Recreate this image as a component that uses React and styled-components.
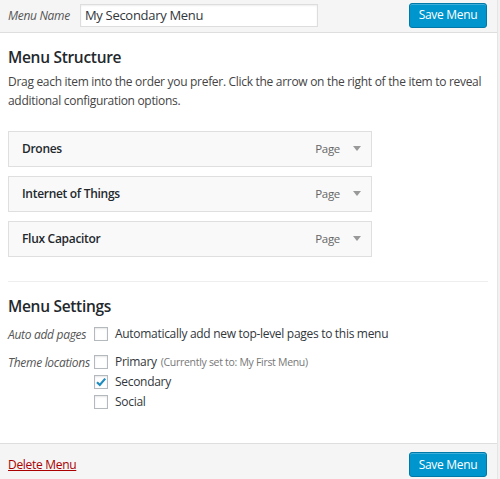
import React from 'react'
import styled, { createGlobalStyle } from 'styled-components'

const GlobalStyle = createGlobalStyle`
  body {
    margin: 0;
    background: #f1f1f1;
    font-family: "Open Sans", "Liberation Sans", sans-serif;
    color: #23282d;
    letter-spacing: -0.3px;
  }
`

const items = ['Drones', 'Internet of Things', 'Flux Capacitor']

const Check = ({ checked }) => (
  <Box>
    {checked && (
      <svg width="12" height="12" viewBox="0 0 12 12">
        <path d="M2 6.2 L4.8 9 L10.2 2.6" fill="none" stroke="#1e8cbe" strokeWidth="2.2" />
      </svg>
    )}
  </Box>
)

const App = () => {
  return (
    <>
      <GlobalStyle />
      <Panel>
        <Header>
          <NameLabel>Menu Name</NameLabel>
          <NameInput defaultValue="My Secondary Menu" />
          <SaveButton>Save Menu</SaveButton>
        </Header>
        <Body>
          <Heading>Menu Structure</Heading>
          <Description>
            Drag each item into the order you prefer. Click the arrow on the right of the item to reveal
            additional configuration options.
          </Description>
          <ItemList>
            {items.map((item) => (
              <Item key={item}>
                <ItemTitle>{item}</ItemTitle>
                <ItemType>Page</ItemType>
                <Arrow />
              </Item>
            ))}
          </ItemList>
          <Divider />
          <Heading>Menu Settings</Heading>
          <SettingRow>
            <SettingLabel>Auto add pages</SettingLabel>
            <Options>
              <Option>
                <Check />
                Automatically add new top-level pages to this menu
              </Option>
            </Options>
          </SettingRow>
          <SettingRow>
            <SettingLabel>Theme locations</SettingLabel>
            <Options>
              <Option>
                <Check />
                Primary <Note>(Currently set to: My First Menu)</Note>
              </Option>
              <Option>
                <Check checked />
                Secondary
              </Option>
              <Option>
                <Check />
                Social
              </Option>
            </Options>
          </SettingRow>
        </Body>
        <Footer>
          <DeleteLink href="#">Delete Menu</DeleteLink>
          <SaveButton>Save Menu</SaveButton>
        </Footer>
      </Panel>
    </>
  )
}

const Panel = styled.div`
  width: 498px;
  height: 479px;
  background: #fff;
  border-right: 1px solid #e5e5e5;
  display: flex;
  flex-direction: column;
  box-sizing: border-box;
`

const Header = styled.div`
  height: 33px;
  box-sizing: border-box;
  background: #f5f5f5;
  border-bottom: 1px solid #dedede;
  display: flex;
  align-items: center;
  padding: 0 10px 2px 8px;
`

const NameLabel = styled.span`
  font-style: italic;
  font-size: 12px;
  color: #555;
  margin-right: 10px;
`

const NameInput = styled.input`
  width: 238px;
  height: 23px;
  box-sizing: border-box;
  border: 1px solid #ddd;
  box-shadow: inset 0 1px 2px rgba(0, 0, 0, 0.07);
  font-family: inherit;
  font-size: 13px;
  letter-spacing: -0.3px;
  color: #32373c;
  padding: 0 4px;
  outline: none;
`

const SaveButton = styled.button`
  margin-left: auto;
  width: 78px;
  height: 25px;
  background: #0095cc;
  border: 1px solid #0079a8;
  border-radius: 3px;
  color: #fff;
  font-family: inherit;
  font-size: 12px;
  letter-spacing: -0.3px;
  padding: 0 0 1px;
  box-shadow: inset 0 1px 0 rgba(120, 200, 230, 0.5);
  cursor: pointer;
`

const Body = styled.div`
  flex: 1;
  padding: 12px 9px 0 8px;
`

const Heading = styled.h3`
  margin: 0;
  font-size: 15.5px;
  font-weight: 600;
  line-height: 24px;
  color: #23282d;
`

const Description = styled.p`
  margin: 3px 0 0;
  font-size: 12px;
  line-height: 19px;
  color: #444;
`

const ItemList = styled.div`
  margin-top: 21px;
  display: flex;
  flex-direction: column;
  gap: 9px;
  width: 364px;
`

const Item = styled.div`
  height: 36px;
  box-sizing: border-box;
  border: 1px solid #dfdfdf;
  background: #f9f9f9;
  display: flex;
  align-items: center;
  padding: 0 10px 1px 13px;
`

const ItemTitle = styled.span`
  font-size: 12px;
  font-weight: 600;
  color: #23282d;
`

const ItemType = styled.span`
  margin-left: auto;
  font-size: 11.5px;
  color: #666;
  margin-right: 13px;
`

const Arrow = styled.span`
  width: 0;
  height: 0;
  border-left: 4px solid transparent;
  border-right: 4px solid transparent;
  border-top: 5px solid #999;
`

const Divider = styled.hr`
  margin: 24px 0 12px;
  border: 0;
  border-top: 1px solid #eee;
  width: 480px;
`

const SettingRow = styled.div`
  display: flex;
  align-items: flex-start;
  margin-top: 6px;
`

const SettingLabel = styled.span`
  width: 86px;
  font-style: italic;
  font-size: 12px;
  line-height: 22px;
  color: #555;
  white-space: nowrap;
`

const Options = styled.div`
  display: flex;
  flex-direction: column;
`

const Option = styled.label`
  display: flex;
  align-items: center;
  font-size: 12px;
  line-height: 20px;
  color: #32373c;
  height: 20px;
  gap: 7px;
  white-space: nowrap;
`

const Box = styled.span`
  width: 14px;
  height: 14px;
  box-sizing: border-box;
  border: 1px solid #b4b9be;
  box-shadow: inset 0 1px 2px rgba(0, 0, 0, 0.1);
  background: #fff;
  display: inline-flex;
  align-items: center;
  justify-content: center;
  flex: none;
`

const Note = styled.span`
  font-size: 10.5px;
  color: #777;
  margin-left: -3px;
`

const Footer = styled.div`
  height: 36px;
  box-sizing: border-box;
  background: #f5f5f5;
  border-top: 1px solid #dedede;
  display: flex;
  align-items: center;
  padding: 6px 10px 0 8px;
`

const DeleteLink = styled.a`
  color: #a00;
  font-size: 12px;
  text-decoration: underline;
`

export default App
